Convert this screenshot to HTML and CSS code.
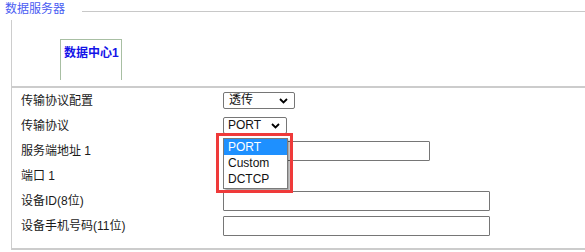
FILE: index.html
```html
<!DOCTYPE html>
<html>
<head>
<meta charset="utf-8">
<link rel="stylesheet" href="styles.css">
</head>
<body>
<div class="group">
  <div class="group-head">
    <span class="group-title">数据服务器</span>
    <span class="group-line"></span>
  </div>
  <div class="group-body">
    <div class="tabs">
      <div class="tab">数据中心1</div>
    </div>
    <div class="rows">
      <div class="row">
        <label class="label">传输协议配置</label>
        <div class="ctrl">
          <select class="sel sel-wide"><option>透传</option></select>
        </div>
      </div>
      <div class="row">
        <label class="label">传输协议</label>
        <div class="ctrl ctrl-anchor">
          <select class="sel sel-narrow"><option>PORT</option><option>Custom</option><option>DCTCP</option></select>
          <div class="popup">
            <div class="opt opt-active">PORT</div>
            <div class="opt">Custom</div>
            <div class="opt">DCTCP</div>
          </div>
          <div class="highlight"></div>
        </div>
      </div>
      <div class="row">
        <label class="label">服务端地址 1</label>
        <div class="ctrl"><input class="inp inp-mid" type="text"></div>
      </div>
      <div class="row">
        <label class="label">端口 1</label>
        <div class="ctrl"><input class="inp inp-short" type="text"></div>
      </div>
      <div class="row">
        <label class="label">设备ID(8位)</label>
        <div class="ctrl"><input class="inp inp-long" type="text"></div>
      </div>
      <div class="row">
        <label class="label">设备手机号码(11位)</label>
        <div class="ctrl"><input class="inp inp-long" type="text"></div>
      </div>
    </div>
  </div>
</div>
</body>
</html>
```

FILE: styles.css
```css
html, body {
  margin: 0;
  padding: 0;
  background: #ffffff;
}
body {
  font-family: "Liberation Sans", "Noto Sans CJK SC", sans-serif;
  font-size: 12px;
  color: #1a1a1a;
  width: 585px;
  height: 252px;
  overflow: hidden;
}
.group-head {
  display: flex;
  align-items: center;
  height: 20px;
}
.group-title {
  padding-left: 5px;
  color: #4a5cf2;
  font-size: 12px;
  line-height: 14px;
  margin-top: -3px;
}
.group-line {
  flex: 1;
  margin-left: 17px;
  border-top: 1px solid #c8c8c8;
  margin-top: 2px;
}
.group-body {
  margin-left: 11px;
  border-left: 1px solid #cdcdcd;
  border-bottom: 2px solid #cccccc;
  padding-bottom: 10px;
}
.tabs {
  padding-top: 19px;
  padding-left: 48px;
  height: 47px;
  border-bottom: 2px solid #cccccc;
  box-sizing: content-box;
}
.tab {
  width: 62px;
  height: 41px;
  border: 1px solid #a8bfa3;
  border-bottom: none;
  box-sizing: border-box;
  padding-left: 3px;
  padding-top: 6px;
  font-weight: bold;
  color: #1414e8;
  font-size: 12px;
  line-height: 14px;
  white-space: nowrap;
}
.rows {
  display: flex;
  flex-direction: column;
}
.row {
  display: flex;
  align-items: center;
  height: 25px;
  padding-left: 9px;
}
.label {
  width: 202px;
  flex: none;
  line-height: 14px;
}
.ctrl {
  display: flex;
  align-items: center;
}
.ctrl-anchor {
  position: relative;
}
.sel {
  -webkit-appearance: none;
  appearance: none;
  height: 17px;
  border: 1px solid #767676;
  border-radius: 2px;
  background: #ffffff url("data:image/svg+xml,%3Csvg xmlns='http://www.w3.org/2000/svg' width='9' height='6' viewBox='0 0 9 6'%3E%3Cpath d='M1 1 L4.5 4.5 L8 1' fill='none' stroke='%23000' stroke-width='1.8'/%3E%3C/svg%3E") no-repeat right 6px center;
  font-family: "Liberation Sans", "Noto Sans CJK SC", sans-serif;
  font-size: 12px;
  color: #111;
  padding: 0 0 0 5px;
  margin: 0;
  line-height: 15px;
  box-sizing: border-box;
}
.sel-wide { width: 72px; }
.sel-narrow { width: 64px; padding-left: 4px; }
.inp {
  height: 20px;
  border: 1px solid #767676;
  border-radius: 1px;
  box-sizing: border-box;
  margin: 0;
  padding: 0 3px;
  font-size: 12px;
  background: #fff;
}
.inp-mid { width: 207px; }
.inp-short { width: 60px; }
.inp-long { width: 267px; }
.popup {
  position: absolute;
  left: 0;
  top: 21px;
  width: 65px;
  height: 51px;
  box-sizing: border-box;
  border: 1px solid #7a7a7a;
  background: #ffffff;
  box-shadow: 2px 2px 2px rgba(0,0,0,0.35);
  z-index: 2;
}
.opt {
  height: 16px;
  line-height: 16px;
  padding-left: 4px;
  color: #111;
  font-size: 12px;
}
.opt-active {
  background: #1e90ff;
  color: #ffffff;
}
.highlight {
  position: absolute;
  left: -7px;
  top: 16px;
  width: 77px;
  height: 60px;
  box-sizing: border-box;
  border: 3px solid #ef3a3a;
  z-index: 3;
}
```
